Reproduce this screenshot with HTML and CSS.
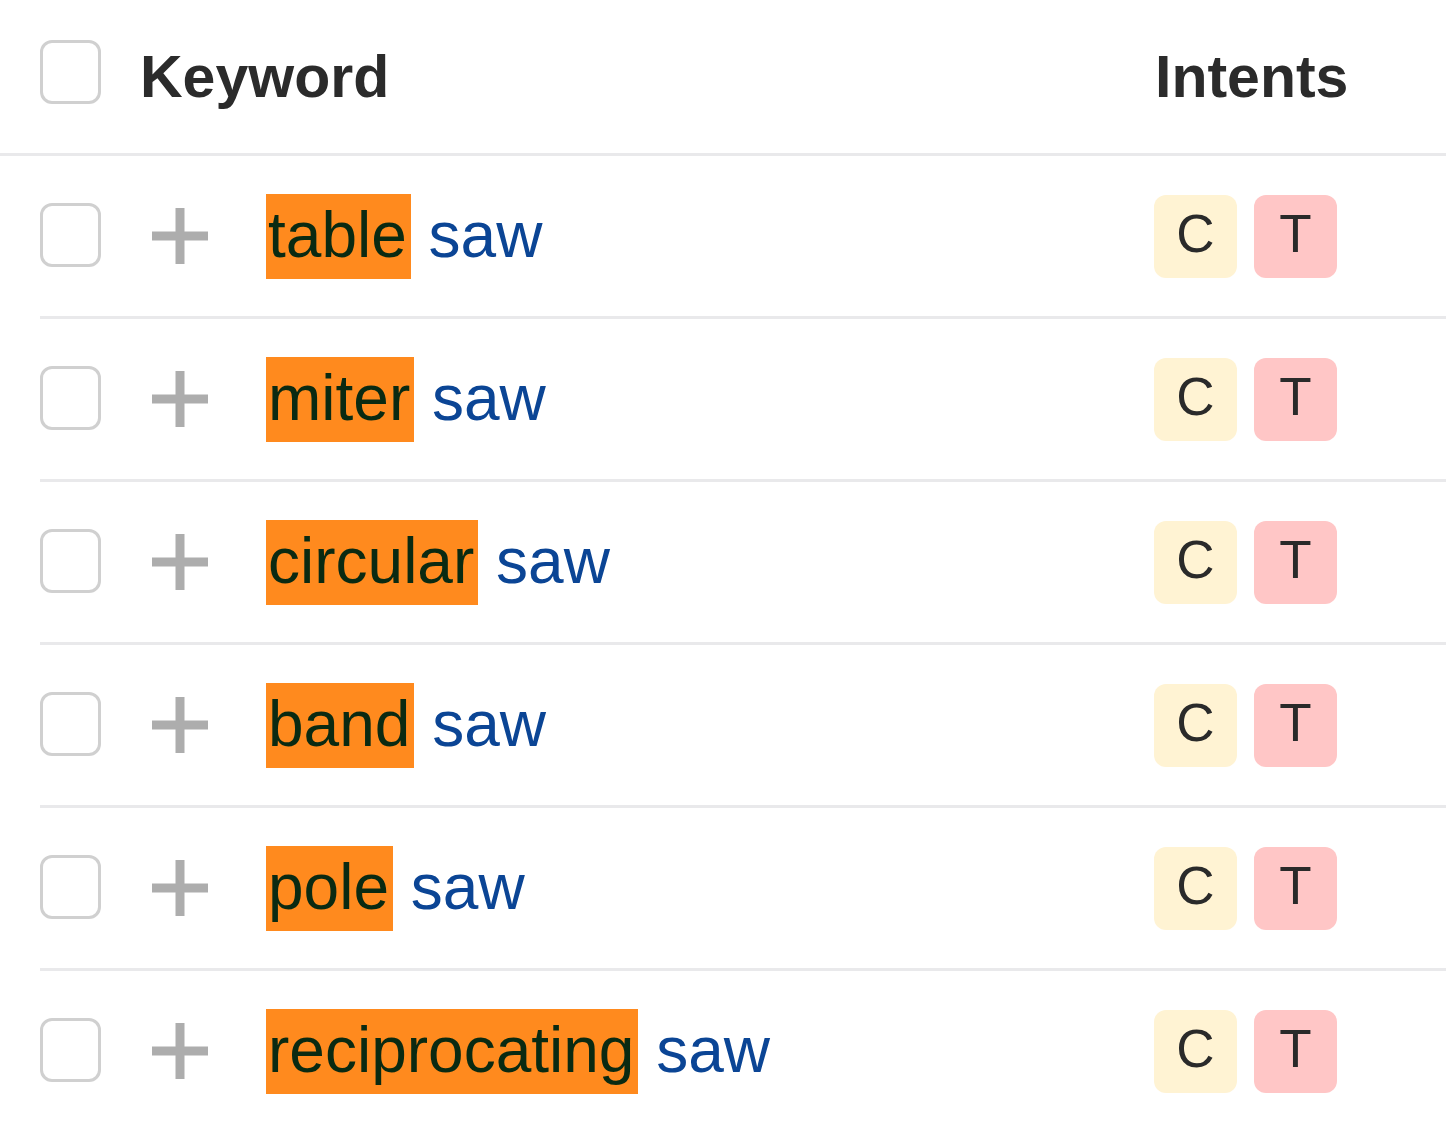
FILE: index.html
```html
<!DOCTYPE html>
<html lang="en">
<head>
<meta charset="utf-8">
<title>Keywords</title>
<link rel="stylesheet" href="styles.css">
</head>
<body>
<div class="table">
  <div class="header">
    <span class="checkbox head-check"></span>
    <div class="kw-head">Keyword</div>
    <div class="intents-head">Intents</div>
  </div>

  <div class="row">
    <span class="checkbox"></span>
    <svg class="plus" viewBox="0 0 56 56" width="56" height="56"><rect x="23.5" y="0" width="9" height="56"/><rect x="0" y="23.5" width="56" height="9"/></svg>
    <div class="kw"><span class="hl">table</span> saw</div>
    <div class="intents"><span class="badge c">C</span><span class="badge t">T</span></div>
  </div>

  <div class="row">
    <span class="checkbox"></span>
    <svg class="plus" viewBox="0 0 56 56" width="56" height="56"><rect x="23.5" y="0" width="9" height="56"/><rect x="0" y="23.5" width="56" height="9"/></svg>
    <div class="kw"><span class="hl">miter</span> saw</div>
    <div class="intents"><span class="badge c">C</span><span class="badge t">T</span></div>
  </div>

  <div class="row">
    <span class="checkbox"></span>
    <svg class="plus" viewBox="0 0 56 56" width="56" height="56"><rect x="23.5" y="0" width="9" height="56"/><rect x="0" y="23.5" width="56" height="9"/></svg>
    <div class="kw"><span class="hl">circular</span> saw</div>
    <div class="intents"><span class="badge c">C</span><span class="badge t">T</span></div>
  </div>

  <div class="row">
    <span class="checkbox"></span>
    <svg class="plus" viewBox="0 0 56 56" width="56" height="56"><rect x="23.5" y="0" width="9" height="56"/><rect x="0" y="23.5" width="56" height="9"/></svg>
    <div class="kw"><span class="hl">band</span> saw</div>
    <div class="intents"><span class="badge c">C</span><span class="badge t">T</span></div>
  </div>

  <div class="row">
    <span class="checkbox"></span>
    <svg class="plus" viewBox="0 0 56 56" width="56" height="56"><rect x="23.5" y="0" width="9" height="56"/><rect x="0" y="23.5" width="56" height="9"/></svg>
    <div class="kw"><span class="hl">pole</span> saw</div>
    <div class="intents"><span class="badge c">C</span><span class="badge t">T</span></div>
  </div>

  <div class="row">
    <span class="checkbox"></span>
    <svg class="plus" viewBox="0 0 56 56" width="56" height="56"><rect x="23.5" y="0" width="9" height="56"/><rect x="0" y="23.5" width="56" height="9"/></svg>
    <div class="kw"><span class="hl">reciprocating</span> saw</div>
    <div class="intents"><span class="badge c">C</span><span class="badge t">T</span></div>
  </div>
</div>
</body>
</html>
```

FILE: styles.css
```css
html, body {
  margin: 0;
  padding: 0;
  background: #ffffff;
}

body {
  font-family: "Liberation Sans", Arial, Helvetica, sans-serif;
  overflow: hidden;
}

.table {
  width: 1446px;
}

.header {
  display: flex;
  align-items: center;
  height: 153px;
  padding-left: 40px;
  border-bottom: 3px solid #e9e9eb;
  box-sizing: content-box;
}

.checkbox {
  display: block;
  flex: none;
  width: 61px;
  height: 64px;
  box-sizing: border-box;
  border: 3px solid #d0d0d0;
  border-radius: 12px;
  background: #fff;
}

.head-check {
  margin-bottom: 9px;
}

.kw-head {
  flex: 1;
  margin-left: 39px;
  font-size: 59px;
  font-weight: 700;
  color: #2b2b2b;
}

.intents-head {
  width: 291px;
  font-size: 59px;
  font-weight: 700;
  color: #2b2b2b;
}

.row {
  display: flex;
  align-items: center;
  height: 160px;
  margin-left: 40px;
  border-bottom: 3px solid #e9e9eb;
}

.row .checkbox {
  margin-bottom: 2px;
}

.plus {
  flex: none;
  margin-left: 51px;
  margin-bottom: 1px;
  fill: #adadad;
}

.kw {
  flex: 1;
  margin-left: 58px;
  font-size: 64px;
  color: #0b4595;
  white-space: nowrap;
}

.hl {
  display: inline-block;
  background: #ff8a1e;
  color: #0a2a12;
  padding: 4px 4px 7px 2px;
}

.intents {
  width: 292px;
  display: flex;
  gap: 17px;
}

.badge {
  display: flex;
  align-items: center;
  justify-content: center;
  width: 83px;
  height: 83px;
  box-sizing: border-box;
  padding-bottom: 6px;
  border-radius: 12px;
  font-size: 53px;
  color: #2a2a2a;
}

.badge.c {
  background: #fff3d3;
}

.badge.t {
  background: #ffc6c6;
}
```
